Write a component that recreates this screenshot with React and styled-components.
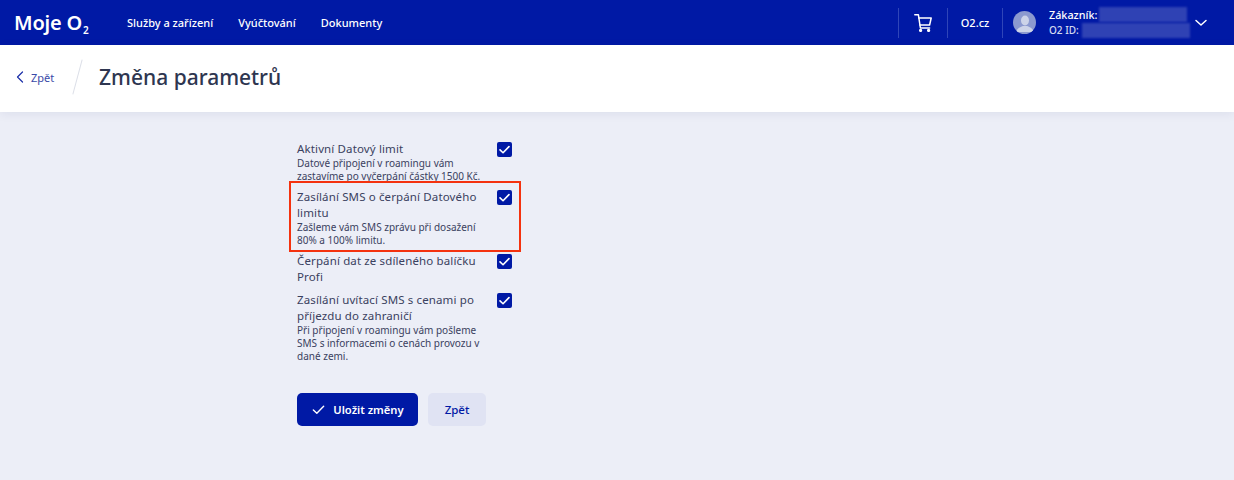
import React from "react"
import styled, { createGlobalStyle } from "styled-components"

const GlobalStyle = createGlobalStyle`
  html, body {
    margin: 0;
    padding: 0;
    background: #eceef7;
    font-family: "Noto Sans", "Open Sans", sans-serif;
    color: #2e3650;
  }
`

const options = [
  {
    title: "Aktivní Datový limit",
    text: "Datové připojení v roamingu vám zastavíme po vyčerpání částky 1500 Kč.",
  },
  {
    title: "Zasílání SMS o čerpání Datového limitu",
    text: "Zašleme vám SMS zprávu při dosažení 80% a 100% limitu.",
    marked: true,
  },
  { title: "Čerpání dat ze sdíleného balíčku Profi" },
  {
    title: "Zasílání uvítací SMS s cenami po příjezdu do zahraničí",
    text: "Při připojení v roamingu vám pošleme SMS s informacemi o cenách provozu v dané zemi.",
  },
]

const CheckIcon = ({ size = 16, width = 2 }) => (
  <svg width={size} height={size} viewBox="0 0 16 16" fill="none">
    <path d="M2.5 8.5 L6.2 12 L13.5 4.5" stroke="#fff" strokeWidth={width} strokeLinecap="round" strokeLinejoin="round" />
  </svg>
)

export default function App() {
  return (
    <>
      <GlobalStyle />
      <Header>
        <Logo>
          Moje O<sub>2</sub>
        </Logo>
        <Nav>
          <NavLink>Služby a zařízení</NavLink>
          <NavLink>Vyúčtování</NavLink>
          <NavLink>Dokumenty</NavLink>
        </Nav>
        <HeaderRight>
          <CartCell>
            <svg width="18" height="18" viewBox="0 0 18 18" fill="none" stroke="#fff" strokeWidth="1.5" strokeLinecap="round" strokeLinejoin="round">
              <path d="M0.8 0.8 H4.4 L6.4 14 H15.6" />
              <path d="M4.9 4 H17.2 L15.6 11 H5.9" />
              <circle cx="6.6" cy="16.4" r="0.9" />
              <circle cx="14.6" cy="16.4" r="0.9" />
            </svg>
          </CartCell>
          <SiteCell>O2.cz</SiteCell>
          <User>
            <Avatar>
              <svg width="22" height="22" viewBox="0 0 22 22" fill="#ccd3e8">
                <ellipse cx="11" cy="8.5" rx="4" ry="5" />
                <path d="M2.5 20 C3 15.5 7 15 9 14 H13 C15 15 19 15.5 19.5 20 Z" />
              </svg>
            </Avatar>
            <UserText>
              <UserLine>
                Zákazník:<Hidden $left={2} $width={88} />
              </UserLine>
              <UserLine $small>
                O2 ID:<Hidden $left={3} $width={108} />
              </UserLine>
            </UserText>
            <svg width="14" height="14" viewBox="0 0 14 14" fill="none" stroke="#fff" strokeWidth="1.5" strokeLinecap="round" strokeLinejoin="round">
              <path d="M2 4.5 L7 9 L12 4.5" />
            </svg>
          </User>
        </HeaderRight>
      </Header>
      <SubHeader>
        <BackLink>
          <svg width="8" height="12" viewBox="0 0 8 12" fill="none" stroke="#1a2fa8" strokeWidth="1.2" strokeLinecap="round" strokeLinejoin="round">
            <path d="M6.5 1 L1.5 6 L6.5 11" />
          </svg>
          Zpět
        </BackLink>
        <Slash />
        <Title>Změna parametrů</Title>
      </SubHeader>
      <Main>
        <Form>
          {options.map(o => (
            <Option key={o.title} $marked={o.marked} $bare={!o.text}>
              <OptionText>
                <OptionTitle>{o.title}</OptionTitle>
                {o.text && <OptionNote>{o.text}</OptionNote>}
              </OptionText>
              <Box>
                <CheckIcon size={13} />
              </Box>
            </Option>
          ))}
          <Actions>
            <PrimaryButton>
              <CheckIcon size={15} width={1.5} />
              Uložit změny
            </PrimaryButton>
            <SecondaryButton>Zpět</SecondaryButton>
          </Actions>
        </Form>
      </Main>
    </>
  )
}

const Header = styled.header`
  height: 45px;
  background: #0019a5;
  color: #fff;
  display: flex;
  align-items: center;
  padding-left: 14px;
  padding-right: 26px;
`

const Logo = styled.div`
  font-size: 20px;
  font-weight: 600;
  letter-spacing: -0.2px;
  width: 113px;
  line-height: 45px;
  white-space: nowrap;

  sub {
    font-size: 10px;
    line-height: 0;
    vertical-align: -4px;
    margin-left: 1px;
  }
`

const Nav = styled.nav`
  display: flex;
  gap: 25px;
`

const NavLink = styled.a`
  font-size: 11px;
  font-weight: 500;
  color: #fff;
`

const HeaderRight = styled.div`
  margin-left: auto;
  display: flex;
  align-items: center;
`

const CartCell = styled.div`
  width: 48px;
  height: 30px;
  border-left: 1px solid #2f45b8;
  border-right: 1px solid #2f45b8;
  display: flex;
  align-items: center;
  justify-content: center;
`

const SiteCell = styled.div`
  width: 54px;
  height: 30px;
  line-height: 30px;
  text-align: center;
  font-size: 11px;
  font-weight: 500;
  border-right: 1px solid #2f45b8;
`

const User = styled.div`
  display: flex;
  align-items: center;
  padding-left: 10px;
`

const Avatar = styled.div`
  width: 23px;
  height: 23px;
  border-radius: 50%;
  background: #8b99cf;
  overflow: hidden;
  display: flex;
  align-items: flex-end;
  justify-content: center;
  margin-right: 13px;
`

const UserText = styled.div`
  width: 137px;
  margin-right: 8px;
  display: flex;
  flex-direction: column;
  gap: 1px;
`

const UserLine = styled.div`
  display: flex;
  align-items: center;
  font-size: ${props => (props.$small ? "10px" : "10.8px")};
  font-weight: 500;
  line-height: 15px;
  white-space: nowrap;
  color: ${props => (props.$small ? "#d5daf0" : "#fff")};
`

const Hidden = styled.span`
  display: inline-block;
  height: 15px;
  width: ${props => props.$width}px;
  margin-left: ${props => props.$left}px;
  background: #2f42b4;
  filter: blur(1px);
  flex-shrink: 0;
`

const SubHeader = styled.div`
  box-sizing: border-box;
  height: 67px;
  padding: 0 0 3px 16px;
  background: #fff;
  box-shadow: 0 2px 10px rgba(20, 30, 90, 0.07);
  display: flex;
  align-items: center;
  position: relative;
`

const BackLink = styled.a`
  display: flex;
  align-items: center;
  gap: 7px;
  font-size: 11px;
  color: #3a4aa8;
  width: 61px;
`

const Slash = styled.div`
  width: 1px;
  height: 36px;
  background: #dcdfe8;
  transform: rotate(15deg);
  margin-right: 21px;
`

const Title = styled.h1`
  margin: 0;
  font-size: 21px;
  font-weight: 500;
  color: #2e3650;
`

const Main = styled.main`
  padding: 29px 0 0 297px;
`

const Form = styled.div`
  width: 215px;
`

const Option = styled.div`
  display: flex;
  justify-content: space-between;
  align-items: flex-start;
  position: relative;
  padding-bottom: ${props => (props.$bare ? "7px" : "6px")};

  ${props =>
    props.$marked &&
    `
    &::after {
      content: "";
      position: absolute;
      left: -8px;
      right: -9px;
      top: -8px;
      bottom: 1px;
      border: 2px solid #f4320f;
      pointer-events: none;
    }
  `}
`

const OptionText = styled.div`
  width: 190px;
`

const OptionTitle = styled.div`
  font-size: 11.5px;
  line-height: 16px;
  letter-spacing: 0.13px;
  color: #3a4160;
`

const OptionNote = styled.div`
  font-size: 10px;
  line-height: 13px;
  color: #3a4160;
`

const Box = styled.div`
  width: 15px;
  height: 15px;
  margin-top: 1px;
  border-radius: 2px;
  background: #0019a5;
  display: flex;
  align-items: center;
  justify-content: center;
  flex-shrink: 0;
`

const Actions = styled.div`
  display: flex;
  gap: 10px;
  margin-top: 24px;
`

const PrimaryButton = styled.button`
  width: 121px;
  height: 33px;
  border: 0;
  border-radius: 5px;
  background: #0019a5;
  color: #fff;
  font-family: inherit;
  font-size: 11.2px;
  font-weight: 600;
  display: flex;
  align-items: center;
  justify-content: center;
  gap: 7px;
`

const SecondaryButton = styled.button`
  width: 58px;
  height: 33px;
  border: 0;
  border-radius: 5px;
  background: #e0e3f3;
  color: #0019a5;
  font-family: inherit;
  font-size: 11.5px;
  font-weight: 500;
`
